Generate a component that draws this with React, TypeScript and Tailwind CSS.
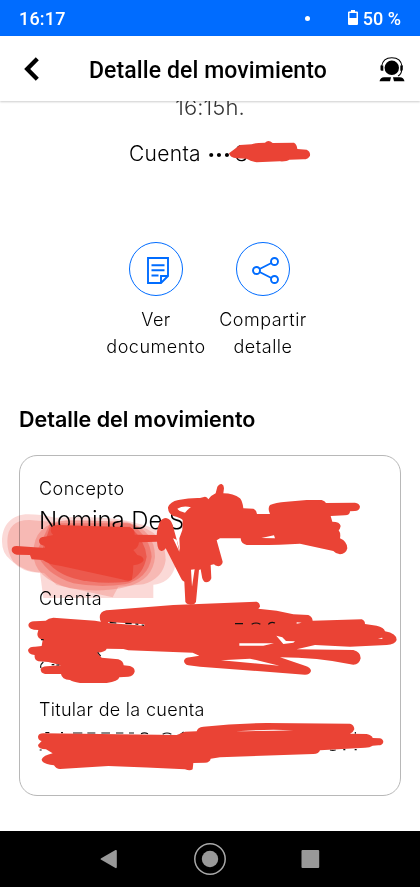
import React from "react";

function StatusBar() {
  return (
    <div className="flex h-9 shrink-0 items-center bg-[#006cff] pl-[19px] pr-[19px] font-[Roboto,sans-serif] text-[18px] font-medium text-white">
      <span className="tracking-[0.2px]">16:17</span>
      <span className="ml-auto mr-[38px] size-[5px] rounded-full bg-white" />
      <svg className="mr-[5px] -mt-[1px] h-[15px] w-[10px]" viewBox="0 0 10 15">
        <path fill="#fff" fillRule="evenodd" d="M3 0h4v1.500h2q1 0 1 1V14q0 1-1 1H1q-1 0-1-1V2.500q0-1 1-1h2zM1.500 3v5h7V3z" />
      </svg>
      <span>50 %</span>
    </div>
  );
}

function Header() {
  return (
    <header className="flex h-[65px] shrink-0 items-center bg-white pl-6 shadow-[0_1px_2px_#0003]">
      <svg className="mt-[1px] h-6 w-4" viewBox="0 0 16 24">
        <path d="M13.300 1.800 3.200 12l10.100 10.200" fill="none" stroke="#000" strokeWidth="4.300" />
      </svg>
      <h1 className="ml-[49px] w-[240px] whitespace-nowrap pt-[5px] font-[Roboto,sans-serif] text-[23px] font-medium tracking-[0.1px]">Detalle del movimiento</h1>
      <svg className="ml-[50px] mt-[1px] h-[25px] w-[26px]" viewBox="0 0 26 25">
        <circle cx="12.800" cy="10.800" r="7.200" />
        <path d="M2.500 9.500C3.500 3.500 7.500.8 12.800.8s9.500 2.700 10.300 8.700M22.600 13c0 3-1.300 4.700-3.500 6" fill="none" stroke="#000" strokeWidth="1.100" />
        <path d="M1.500 8.500h2.800v5.300H2.800q-1.300 0-1.300-1.300zM21.300 8.500h2.500v4q0 1.300-1.300 1.300h-1.200zM.5 24.300q1-3.800 4.500-4H12l-1 4zM14 20.300h7q3.500.2 4.500 4H15z" />
      </svg>
    </header>
  );
}

function Action({ lines, children }: { lines: string[]; children: React.ReactNode }) {
  return (
    <div className="flex w-[107px] flex-col items-center">
      <span className="flex size-[54px] items-center justify-center rounded-full border-[1.300px] border-[#006cff] text-[#006cff]">{children}</span>
      <span className="mt-[10px] text-center text-[18px] font-[350] leading-[27px] tracking-[0.5px]">
        {lines[0]}<br />{lines[1]}
      </span>
    </div>
  );
}

function Scribbles() {
  return (
    <svg className="pointer-events-none absolute inset-0 h-[887px] w-[420px] mix-blend-multiply" viewBox="0 0 420 887" fill="#ea4335">
      <g transform="translate(0 470) scale(.33333)">
        <path opacity=".2" d="M6 215C6 165 35 133 85 133Q120 133 165 143Q330 135 410 160Q485 178 520 212Q535 260 523 298Q505 342 460 344V384H130L120 308Q70 310 32 270Q6 250 6 215Z" />
        <path opacity=".22" d="M22 214Q22 150 88 150L150 155Q390 140 455 185Q496 210 497 270Q490 325 430 343L355 350 338 382 170 345 132 309Q70 305 40 275 22 250 22 214Z" />
        <path opacity=".25" d="M100 250Q100 160 200 150L380 155Q465 180 465 260 460 330 380 350 300 370 210 355 100 325 100 250Z" />
        <path opacity=".35" d="M110 245L150 160H390Q450 200 455 260 445 325 375 343 300 355 220 340 130 310 110 245Z" />
        <path opacity=".6" d="M125 245L150 170H390Q435 210 440 260 430 315 385 335 290 345 220 325 145 300 125 245Z" />
      </g>
    </svg>
  );
}

function Strokes() {
  return (
    <svg className="pointer-events-none absolute inset-0 h-[887px] w-[420px]" viewBox="0 0 420 887" fill="#ea4335">
      <g transform="translate(90 90) scale(.33333)">
        <path d="M417 190L450 165 485 163Q495 158 525 158 535 148 548 159L612 158Q621 163 622 177L650 179Q662 185 660 197 655 208 640 208L598 209Q590 215 570 214L500 217Q480 213 470 206L440 205Q420 203 417 190Z" />
      </g>
      <g transform="translate(0 470) scale(.33333)">
        <path d="M35 240Q35 228 50 228L135 234V228Q117 225 117 212 118 200 135 200L160 195Q148 185 155 172 160 165 175 165L390 172Q404 176 404 194L470 195Q472 170 480 155 487 144 498 144 512 146 518 165L540 245 538 205 547 180 548 150Q540 142 520 138 504 130 504 112 510 95 535 90 570 83 600 84L615 80Q622 80 625 88 635 75 647 70L652 50Q658 40 665 42 672 45 672 55L670 70Q700 70 720 85 728 95 730 115L760 116Q770 120 771 132L810 132Q802 115 810 105 825 98 860 95L920 90H965Q975 93 978 99L1065 98Q1078 100 1080 110 1078 123 1065 123L1050 124Q1050 136 1035 136L992 138 997 155Q1020 155 1022 168 1020 178 1016 181 1023 190 1020 205 1042 215 1042 235 1038 252 1020 253 1008 252 1000 243L900 221Q830 226 740 225 723 222 722 205L660 205 650 211 668 275Q668 285 655 289 645 288 642 283L632 285 634 325Q630 337 618 337 607 335 605 315L602 298 597 300 588 395Q585 404 572 404 558 402 556 395L553 335Q545 332 543 325L497 235Q492 244 484 243 473 242 471 215L417 217Q415 235 400 240L412 255Q430 258 431 270 428 282 400 286 400 310 395 330 385 335 365 328L180 287Q150 285 128 270L95 268 90 255 50 254Q35 250 35 240Z" />
        <path fill="#fff" d="M532 116Q550 106 573 112Q560 120 555 128Q535 123 532 116ZM784 204L822 196 825 205ZM573 299L584 298 576 350ZM519 205L530 209 538 245Z" />
      </g>
      <g transform="translate(0 590) scale(.33333)">
        <path d="M85 105Q88 93 105 94L137 92Q145 84 160 83L285 92 303 95Q298 90 300 75 305 60 330 60L520 45 770 35Q780 38 780 50L775 56 830 62 880 73 925 75Q937 80 938 92L1085 88Q1095 92 1095 102L1130 107Q1152 112 1155 124 1190 130 1190 150 1185 164 1160 165L1050 170 945 165 890 178 1060 180Q1082 185 1082 205 1078 224 1060 224 950 202 840 202L915 227Q933 233 933 243 930 254 915 254L600 230 565 226Q552 222 552 212 556 202 570 202L598 197 578 188 385 181 370 177 320 176Q318 185 292 188L305 203 355 208Q370 213 371 226L390 228Q405 233 404 245 400 258 385 260L358 262Q355 275 320 279H240Q215 275 210 270 185 268 183 252L135 252Q122 250 122 238 124 230 140 229L183 226 145 216 115 214Q102 210 104 195 85 193 84 180 88 169 105 170L125 168 128 150Q112 145 112 132L115 120Q85 120 85 105Z" />
        <path fill="#fff" d="M718 160H822L790 167H718ZM829 137L847 142 858 153 885 154 880 158 850 162ZM663 211L750 206 838 227ZM890 97L905 98 890 101ZM1134 145L1147 143V147ZM325 96L433 103V107L325 99Z" />
        <path fill="none" stroke="#111" strokeWidth="3.500" d="M329 97L349 99M376 100L395 101M406 102L415 103M425 105L432 106M705 101L729 101M755 103Q768 95 781 103M805 103Q812 94 825 99M123 234Q119 225 130 216M293 187L302 198M123 149H131M155 224H163M169 225H178" />
      </g>
      <g transform="translate(0 690) scale(.33333)">
        <path fill="none" stroke="#111" strokeWidth="3.500" d="M136 128H148M183 128H189M219 129H247M262 129H286M304 129H330M348 129H370M387 129H402M423 131Q433 126 444 131M488 133Q501 125 514 133M542 133L551 126M1066 126V131M119 180H125M990 180Q998 182 1007 180M1030 179H1036M1064 179H1070" />
        <path d="M114 140Q116 130 130 130L530 135 555 125 590 124Q592 112 610 110 700 100 800 99L1050 101Q1063 105 1063 118 1060 127 1050 131L1100 132Q1117 136 1118 144L1140 145Q1150 148 1150 156 1148 166 1135 166L1118 167Q1110 173 1095 173L960 181Q957 192 940 192L660 202 632 206Q630 217 615 218L580 219 578 238Q570 244 555 238 440 232 325 228L180 237Q168 237 162 226 125 222 125 208 130 196 158 190L138 178Q115 178 114 165L125 153Q114 150 114 140Z" />
        <path fill="#fff" d="M708 124Q800 117 880 121Q800 123 708 124Z" />
      </g>
    </svg>
  );
}

function NavBar() {
  return (
    <nav className="flex h-14 shrink-0 items-center bg-black pl-[100px]">
      <svg className="h-8 w-[220px]" viewBox="100 843 220 32" fill="#999">
        <path d="M101.200 858.200 115.500 850q1.300-.5 1.300 1v16q0 1.500-1.300 1l-14.300-8.200q-1.300-.8 0-1.600Z" />
        <circle cx="210" cy="859" r="15.200" fill="none" stroke="#aaa" strokeWidth="1.500" />
        <circle cx="210" cy="859" r="8.200" />
        <rect x="301.500" y="850" width="17.700" height="18" rx="1" />
      </svg>
    </nav>
  );
}

export default function App() {
  return (
    <div className="relative flex h-[887px] w-[420px] flex-col overflow-hidden bg-white font-[Inter,'Liberation_Sans',sans-serif] text-black">
      <StatusBar />
      <Header />
      <main className="flex min-h-0 flex-1 flex-col overflow-hidden">
        <p className="-mt-[7px] text-center text-[22px] font-[350] leading-[26px] tracking-[0.1px] text-[#333]">16:15h.</p>
        <p className="ml-[129px] mt-[20px] flex items-center whitespace-nowrap text-[21px] font-[350] leading-7 tracking-[0.3px]">
          Cuenta<span className="ml-[6px] mr-[-4px] text-[15px] tracking-[-0.5px]">••••</span>S
        </p>
        <div className="mt-[74px] flex pl-[102.500px]">
          <Action lines={["Ver", "documento"]}>
            <svg className="ml-[4px] mt-[2px] h-[27px] w-[22px]" viewBox="0 0 22 27" fill="none" stroke="currentColor" strokeWidth="1.900">
              <path d="M1 1h20v18l-7 7H1zM14 26v-7h7M4.500 8.200h13M4.500 13.200h13M4.500 18.500h7" />
            </svg>
          </Action>
          <Action lines={["Compartir", "detalle"]}>
            <svg className="ml-[5px] mt-[3px] h-[27px] w-[27px]" viewBox="0 0 27 27" fill="none" stroke="currentColor" strokeWidth="1.900">
              <circle cx="4.500" cy="13.500" r="3.500" /><circle cx="22.500" cy="4.500" r="3.500" /><circle cx="22.500" cy="22.500" r="3.500" />
              <path d="M7.600 12 19.400 6M7.600 15 19.400 21" />
            </svg>
          </Action>
        </div>
        <h2 className="ml-[19px] mt-[44px] whitespace-nowrap text-[21.500px] font-semibold leading-[30px]">Detalle del movimiento</h2>
        <section className="ml-[19px] mt-[21px] flex h-[341px] w-[382px] shrink-0 flex-col rounded-[18px] border border-[#b8b8b8] pl-[19px] pt-[21px]">
          <h3 className="text-[18px] font-[350] leading-6 tracking-[0.5px]">Concepto</h3>
          <p className="mt-[4px] whitespace-nowrap text-[24px] font-[350] leading-8 tracking-[-0.1px]">Nomina De S</p>
          <h3 className="mt-[50px] text-[18px] font-[350] leading-6 tracking-[0.5px]">Cuenta</h3>
          <h3 className="mt-[87px] text-[18px] font-[350] leading-6 tracking-[0.3px]">Titular de la cuenta</h3>
        </section>
      </main>
      <NavBar />
      <Scribbles />
      <Strokes />
    </div>
  );
}
